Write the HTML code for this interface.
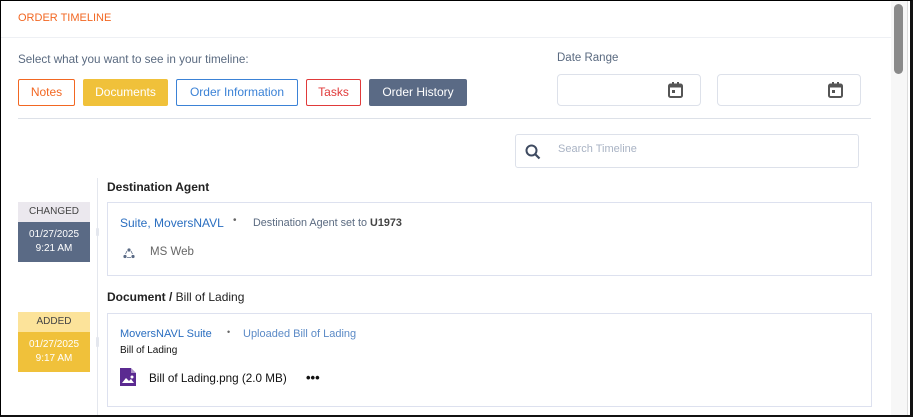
<!DOCTYPE html>
<html><head><meta charset="utf-8"><style>
*{box-sizing:border-box;margin:0;padding:0}
body{width:913px;height:417px;overflow:hidden;background:#fff;font-family:"Liberation Sans",sans-serif;position:relative}
.a{position:absolute}
.frame{left:0;top:0;width:913px;height:417px;border:1px solid #000;border-right:3px solid #111;border-bottom:2px solid #111}
.btn{position:absolute;top:79px;height:27px;border:1px solid;border-radius:2px;font-size:12px;line-height:25px;text-align:center}
.inp{position:absolute;top:74px;height:32px;border:1px solid #dde1ea;border-radius:4px}
.card{position:absolute;left:107px;width:765px;border:1px solid #dde1ef}
</style></head><body>
<div class="a" style="left:1px;top:1px;width:890px;height:37px;border-bottom:1px solid #eef0f4"></div>
<div class="a" style="left:18px;top:12px;font-size:11px;color:#f26722">ORDER TIMELINE</div>
<div class="a" style="left:18px;top:53px;font-size:11.7px;color:#5a6a80">Select what you want to see in your timeline:</div>
<div class="btn" style="left:18px;width:57px;border-color:#f26722;color:#f26722">Notes</div>
<div class="btn" style="left:83px;width:85px;border-color:#f0c13a;background:#f0c13a;color:#fff">Documents</div>
<div class="btn" style="left:176px;width:122px;border-color:#3b82d6;color:#3b82d6">Order Information</div>
<div class="btn" style="left:306px;width:55px;border-color:#e03a3a;color:#e03a3a">Tasks</div>
<div class="btn" style="left:369px;width:98px;border-color:#5a6a85;background:#5a6a85;color:#fff">Order History</div>
<div class="a" style="left:557px;top:52px;font-size:11.5px;color:#5a6a80">Date Range</div>
<div class="inp" style="left:557px;width:144px"></div>
<div class="inp" style="left:717px;width:144px"></div>
<svg class="a" style="left:668px;top:82px" width="15" height="16" viewBox="0 0 15 16"><rect x="1" y="2.5" width="13" height="12.5" rx="1.5" fill="none" stroke="#555" stroke-width="2"/><rect x="1" y="2.5" width="13" height="3" fill="#555"/><rect x="4" y="0" width="2" height="3" fill="#555"/><rect x="9" y="0" width="2" height="3" fill="#555"/><rect x="4" y="8" width="3" height="3" fill="#555"/></svg>
<svg class="a" style="left:828px;top:82px" width="15" height="16" viewBox="0 0 15 16"><rect x="1" y="2.5" width="13" height="12.5" rx="1.5" fill="none" stroke="#555" stroke-width="2"/><rect x="1" y="2.5" width="13" height="3" fill="#555"/><rect x="4" y="0" width="2" height="3" fill="#555"/><rect x="9" y="0" width="2" height="3" fill="#555"/><rect x="4" y="8" width="3" height="3" fill="#555"/></svg>
<div class="a" style="left:18px;top:118px;width:853px;height:1px;background:#dde1e8"></div>
<div class="a" style="left:515px;top:134px;width:344px;height:34px;border:1px solid #dde1ea;border-radius:3px"></div>
<svg class="a" style="left:525px;top:144px" width="16" height="16" viewBox="0 0 16 16"><circle cx="6.5" cy="6.5" r="5" fill="none" stroke="#3e4a60" stroke-width="2"/><path d="M10 10l4.5 4.5" stroke="#3e4a60" stroke-width="2.2"/></svg>
<div class="a" style="left:558px;top:143px;font-size:11px;color:#a9b3c4">Search Timeline</div>
<div class="a" style="left:97px;top:178px;width:1px;height:239px;background:#e4e7ee"></div>
<div class="a" style="left:96px;top:228px;width:3px;height:8px;background:#e4e7ee;border-radius:1px"></div>
<div class="a" style="left:96px;top:337px;width:3px;height:10px;background:#e4e7ee;border-radius:1px"></div>
<div class="a" style="left:107px;top:180px;font-size:12px;font-weight:bold;color:#222">Destination Agent</div>
<div class="a" style="left:18px;top:202px;width:72px;height:20px;background:#ebe8ee;color:#444;font-size:10px;text-align:center;line-height:19px">CHANGED</div>
<div class="a" style="left:18px;top:222px;width:72px;height:40px;background:#5a6a85;color:#fff;font-size:10px;text-align:center;line-height:14px;padding-top:6px">01/27/2025<br>9:21 AM</div>
<div class="card" style="top:202px;height:74px"></div>
<div class="a" style="left:120px;top:216px;font-size:12px;color:#2a6ec0">Suite, MoversNAVL</div>
<div class="a" style="left:233px;top:215px;font-size:10px;color:#666">•</div>
<div class="a" style="left:253px;top:217px;font-size:10.8px;color:#5a6a80">Destination Agent set to <b style="color:#444">U1973</b></div>
<svg class="a" style="left:123px;top:248px" width="12" height="11" viewBox="0 0 12 11"><circle cx="6" cy="2" r="1.6" fill="#5a6a85"/><circle cx="2" cy="8.5" r="1.6" fill="#5a6a85"/><circle cx="10" cy="8.5" r="1.6" fill="#5a6a85"/><path d="M4 3L2.5 6M8 3l1.5 3M4 9.5h4" stroke="#5a6a85" stroke-width="0.8" fill="none"/></svg>
<div class="a" style="left:150px;top:246px;font-size:11.5px;color:#666">MS Web</div>
<div class="a" style="left:107px;top:290px;font-size:12px;color:#222"><b>Document /</b> Bill of Lading</div>
<div class="a" style="left:18px;top:312px;width:72px;height:20px;background:#fce39a;color:#444;font-size:10px;text-align:center;line-height:19px">ADDED</div>
<div class="a" style="left:18px;top:332px;width:72px;height:40px;background:#f0c13a;color:#fff;font-size:10px;text-align:center;line-height:14px;padding-top:6px">01/27/2025<br>9:17 AM</div>
<div class="card" style="top:313px;height:94px"></div>
<div class="a" style="left:120px;top:328px;font-size:11px;color:#2a6ec0">MoversNAVL Suite</div>
<div class="a" style="left:227px;top:327px;font-size:9px;color:#666">•</div>
<div class="a" style="left:243px;top:328px;font-size:11px;color:#5b8ac6">Uploaded Bill of Lading</div>
<div class="a" style="left:120px;top:345px;font-size:10px;color:#111">Bill of Lading</div>
<svg class="a" style="left:120px;top:368px" width="16" height="18" viewBox="0 0 16 18"><path d="M0 0h11l5 5v13H0z" fill="#5b2a91"/><path d="M11 0v5h5" fill="#fff" opacity="0.5"/><path d="M2 15l4-5 3 3 2-2 3 4z" fill="#fff"/><circle cx="12" cy="9" r="1.5" fill="#fff"/></svg>
<div class="a" style="left:149px;top:372px;font-size:11.7px;color:#111">Bill of Lading.png (2.0 MB)</div>
<div class="a" style="left:306px;top:370px;font-size:13px;font-weight:bold;color:#111">•••</div>
<div class="a" style="left:891px;top:1px;width:17px;height:414px;background:#f7f7f7;border-right:1px solid #ddd"></div>
<div class="a" style="left:894px;top:4px;width:9px;height:70px;background:#8a8a8a;border-radius:5px"></div>
<div class="a frame"></div>
</body></html>
